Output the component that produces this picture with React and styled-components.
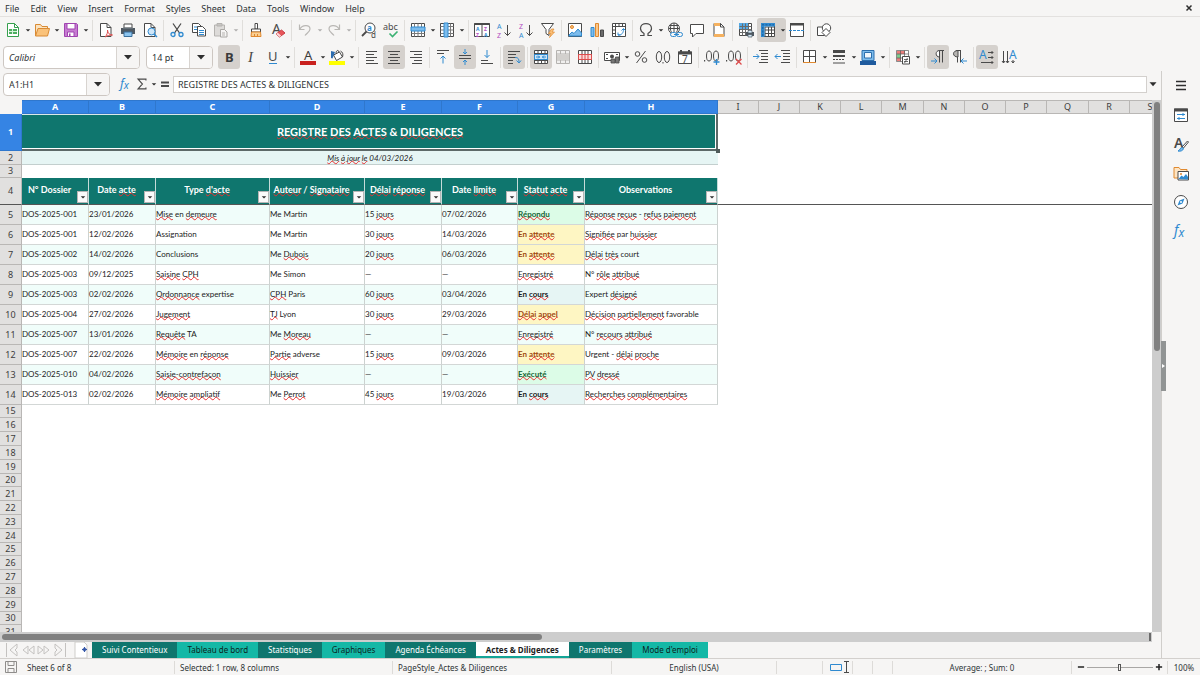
import React from "react";
import styled, { createGlobalStyle, css } from "styled-components";

const ink = "#4a4a4a";
const blue = "#2f8ad0";
const pale = "#8cc4ee";
const orange = "#e0892f";
const red = "#dd4b4b";
const purple = "#b14cc0";

const line = (d, stroke = ink, extra = {}) => (
  <path d={d} stroke={stroke} fill="none" {...extra} />
);

const icons = {
  newDoc: (
    <>
      <path d="M2.5 1.5h7l4 4v9h-11z" fill="#fff" stroke="#36a04e" />
      {line("M9.500 1.500v4h4", "#36a04e")}
      <path d="M4 7h8v5H4z" fill="#4cae5f" />
      {line("M4 9.500h8M7.500 7v5", "#d6f2db")}
    </>
  ),
  open: (
    <>
      <path d="M1.500 14V2.500h5l1.500 2h5.500V7" fill="#fbe3bf" stroke="#d98a33" />
      <path d="M1.500 14l2.500-7.500h11.500L13.500 14z" fill="#fac27a" stroke="#d98a33" />
    </>
  ),
  save: (
    <>
      <path d="M1.500 1.500h12l1 1v12h-13z" fill="#c67bd1" stroke="#a044b0" />
      <path d="M4 1.500h8V7H4z" fill="#fff" stroke="#a044b0" />
      <path d="M4.500 10h6.500v4.500H4.500z" fill="#fff" stroke="#a044b0" />
      <path d="M6 11.500h1.500v3H6z" fill="#a044b0" />
    </>
  ),
  pdf: (
    <>
      <path d="M2.500 1.500h6.500l4 4v9H2.500z" fill="#fff" stroke={ink} />
      {line("M9 1.500v4h4")}
      <path d="M7 15c2-2 3-5 2.500-7 0 3 2 5 5 5-3 0-5 .5-7.500 2z" fill="#fff" stroke={red} />
    </>
  ),
  print: (
    <>
      <path d="M4 2h8v4H4z" fill="#fff" stroke={ink} />
      <path d="M1 6h14v6H1z" fill="#4f5962" />
      <path d="M3 6h10" stroke="#7b858d" />
      <path d="M4 10h8v4.500H4z" fill={pale} stroke="#3a6f9b" />
    </>
  ),
  preview: (
    <>
      <path d="M2.500 1.500h6.500l4 4v9H2.500z" fill="#fff" stroke={ink} />
      {line("M9 1.500v4h4")}
      <circle cx="9.500" cy="9.500" r="3.500" fill="#cfe6f8" stroke={blue} />
      {line("M12 12l3 3", blue, { strokeWidth: 1.5 })}
    </>
  ),
  cut: (
    <>
      {line("M4 1.500l6.500 9.500M12 1.500L5.500 11", ink, { strokeWidth: 1.3 })}
      <circle cx="4" cy="12.500" r="2" fill="none" stroke={blue} strokeWidth="1.3" />
      <circle cx="12" cy="12.500" r="2" fill="none" stroke={blue} strokeWidth="1.3" />
    </>
  ),
  copy: (
    <>
      <path d="M1.500 1.500h6l2.500 2.500v6.500H1.500z" fill="#fff" stroke={ink} />
      {line("M3 5h5M3 7.500h4", blue)}
      <path d="M6.500 4.500h5l3 3v6.500h-8z" fill="#fff" stroke={ink} />
      {line("M8 8.500h5M8 10.500h5M8 12.500h5", blue)}
    </>
  ),
  paste: (
    <>
      <path d="M1.500 3h10v11h-10z" fill="#dddbd9" stroke="#b5b3b0" />
      <path d="M4 1.500h5V4H4z" fill="#c8c6c3" stroke="#b5b3b0" />
      <path d="M7.500 7.500h4l2.500 2.500v5H7.500z" fill="#f6f5f4" stroke="#a9a7a4" />
      {line("M9 11h3M9 13h3", "#b5b3b0")}
    </>
  ),
  clone: (
    <>
      <path d="M7 1.500h2.500V7H7z" fill="#fff" stroke={ink} />
      <path d="M3.500 7h9v3h-9z" fill="#fff" stroke={ink} />
      <path d="M3.500 10h9l.5 4.500H3z" fill="#fbcf92" stroke={orange} />
      {line("M6.500 12v2.500M9.500 12v2.500", orange)}
    </>
  ),
  clear: (
    <>
      <text x="2" y="12" fontSize="14" fill={ink}>A</text>
      <path d="M6 12l5.500-4 3.500 3-5.500 4z" fill="#e8555a" stroke="#c93d44" />
      <path d="M6 12l1.800-1.300 3.500 3L9.500 15z" fill="#fbd5d6" />
    </>
  ),
  undo: line("M2.500 2.500v5h5M3 7c2-4 10-5 10 0 0 3-3 4-5 6.500", "#b9b7b4", { strokeWidth: 1.2 }),
  redo: line("M13.500 2.500v5h-5M13 7c-2-4-10-5-10 0 0 3 3 4 5 6.500", "#b9b7b4", { strokeWidth: 1.2 }),
  find: (
    <>
      <circle cx="9" cy="6" r="5" fill="#fff" stroke={ink} />
      {line("M5.500 9.500L1 14", ink, { strokeWidth: 1.8 })}
      <text x="6" y="8.500" fontSize="8" fontWeight="700" fill={blue}>a</text>
      <text x="10" y="15.500" fontSize="8" fill={ink}>d</text>
    </>
  ),
  spell: (
    <>
      <text x="0" y="8" fontSize="9" fill={ink}>abc</text>
      {line("M6.500 11.500l3 3 5-5", "#3bb273", { strokeWidth: 1.6 })}
    </>
  ),
  row: (
    <>
      <path d="M1.500 1.500h13v13h-13z" fill="#fff" stroke={ink} />
      {line("M1.500 11.500h13M4.500 1.500v13M8 1.500v13M11.500 1.500v13", "#7a7a7a")}
      <path d="M1 5h14v4H1z" fill="#7dbcec" stroke={blue} />
    </>
  ),
  column: (
    <>
      <path d="M1.500 1.500h13v13h-13z" fill="#fff" stroke={ink} />
      {line("M11.500 1.500v13M1.500 4.500h13M1.500 8h13M1.500 11.500h13", "#7a7a7a")}
      <path d="M5 1h4v14H5z" fill="#7dbcec" stroke={blue} />
    </>
  ),
  sort: (
    <>
      <path d="M.500 1.500h15v13H.500z" fill="#fff" stroke={ink} />
      <path d="M.500 1h15v2H.500z" fill={ink} />
      {line("M8 2v13")}
      <text x="2" y="8.500" fontSize="5" fontWeight="700" fill={blue}>A</text>
      <text x="2" y="14.500" fontSize="5" fontWeight="700" fill={purple}>Z</text>
      <text x="10" y="8.500" fontSize="5" fontWeight="700" fill={purple}>Z</text>
      <text x="10" y="14.500" fontSize="5" fontWeight="700" fill={blue}>A</text>
    </>
  ),
  sortAsc: (
    <>
      <text x="1" y="6.500" fontSize="7" fill={blue}>A</text>
      <text x="1" y="16" fontSize="7" fill={purple}>Z</text>
      {line("M11.500 3v10.500M8.500 10.500l3 3 3-3")}
    </>
  ),
  sortDesc: (
    <>
      <text x="1" y="6.500" fontSize="7" fill={purple}>Z</text>
      <text x="1" y="16" fontSize="7" fill={blue}>A</text>
      {line("M11.500 3v10.500M8.500 10.500l3 3 3-3")}
    </>
  ),
  filter: (
    <>
      <path d="M1.500 1.500h12l-4.500 6v6L6 11.500v-4z" fill="#fff" stroke={ink} />
      <path d="M11.500 7L8.500 11.500h2.500L9.500 15.500l5-5.500h-2.500l2-3z" fill="#fbc078" stroke={orange} strokeWidth=".7" />
    </>
  ),
  image: (
    <>
      <path d="M1.500 1.500h13v13h-13z" fill="#fff" stroke={ink} />
      <circle cx="5" cy="5" r="1.500" fill="#fbc078" stroke={orange} />
      <path d="M2 13l3-3 2 1.500 4-4.500 3.500 4V14H2z" fill="#7dbcec" stroke={blue} />
    </>
  ),
  chart: (
    <>
      <path d="M2 5.500h3v9H2z" fill="#7dbcec" stroke={blue} />
      <path d="M6.500 1.500h3v13h-3z" fill="#fbc78a" stroke={orange} />
      <path d="M11.500 8h3v6.500h-3z" fill="#6a6a6a" stroke={ink} />
    </>
  ),
  pivot: (
    <>
      <path d="M1.500 1.500h13v13h-13z" fill="#fff" stroke={ink} />
      {line("M1.500 4.500h13M4.500 1.500v13M8 1.500v3M11.500 1.500v3M1.500 8h3M1.500 11.500h3")}
      {line("M7 10.500v2.500h2.500M7 13c4 0 5.500-2 5.500-6M10.500 8.500l2-2 2 2", blue)}
    </>
  ),
  omega: line("M2 13.500h4v-2C3.500 10 2.500 8.500 2.500 6.500c0-6.500 11-6.500 11 0 0 2-1 3.500-3.500 5v2h4", ink, { strokeWidth: 1.2 }),
  link: (
    <>
      <circle cx="7" cy="6.500" r="5.500" fill="#fff" stroke={ink} />
      {line("M1.500 6.500h11M7 1v11M2.500 3.500h9M4.500 2.500c-1.500 3-1.500 5 0 8M9.500 2.500c1.500 3 1.500 5 0 8")}
      <rect x="3.500" y="10.500" width="6" height="4" rx="2" fill="#f6f5f4" stroke={blue} />
      <rect x="9.500" y="10.500" width="6" height="4" rx="2" fill="#f6f5f4" stroke={blue} />
      {line("M7 12.500h5", blue)}
    </>
  ),
  comment: <path d="M1.500 2.500h13v9H7l-3.500 3.500v-3.500h-2z" fill="#fff" stroke={ink} />,
  headFoot: (
    <>
      <path d="M3 1.500h6.500l3.500 3.500v9.500H3z" fill="#fff" stroke={ink} />
      <path d="M3 1h6v3H3zM3 12h10v3H3z" fill="#f5b15f" />
      {line("M9.500 1.500V5H13")}
    </>
  ),
  printArea: (
    <>
      <path d="M1.500 1.500h12v12h-12z" fill="#fff" stroke={ink} />
      <path d="M1 1h9v6H1z" fill="#55aae6" />
      {line("M1.500 4.500h12M1.500 7.500h12M1.500 10.500h12M4.500 1.500v12M7.500 1.500v12M10.500 1.500v12", "#6a6a6a")}
      <path d="M8 10h8v4H8z" fill="#4f5962" />
      <path d="M10 8.500h4V11h-4zM10 12.500h4V15h-4z" fill="#d3e8f8" stroke="#4f5962" strokeWidth=".7" />
    </>
  ),
  freeze: (
    <>
      <path d="M1.500 1.500h13v13h-13z" fill="#fff" stroke={ink} />
      {line("M5 8h9.500M5 11.500h9.500M8.500 5v9.500M11.500 5v9.500M5 5v9.500M5 5h9.500")}
      <path d="M1 1h14v3.500H4.500V15H1z" fill={blue} />
      {line("M2 2.800h12M2.800 5v9", "#1c5f9a", { strokeDasharray: "2 1.500" })}
    </>
  ),
  split: (
    <>
      <path d="M1.500 1.500h13v13h-13z" fill="#fff" stroke={ink} />
      <path d="M1 1h14v2.500H1z" fill={ink} />
      {line("M0 8.500h16", blue, { strokeDasharray: "3 1" })}
    </>
  ),
  shapes: (
    <>
      <path d="M1.500 5h7v8.500h-7z" fill="#fff" stroke={ink} />
      <circle cx="10.500" cy="6" r="4.200" fill="#fff" stroke={ink} />
      <path d="M10 6.500l4 4-4 4-4-4z" fill="#fff" stroke={ink} />
    </>
  ),
  bold: <text x="4" y="13" fontSize="13" fontWeight="700" fill="#3a3a3a">B</text>,
  italic: (
    <text x="5" y="13" fontSize="15" fontStyle="italic" fontFamily="Liberation Serif" fill={ink}>I</text>
  ),
  underline: (
    <>
      <text x="3" y="12" fontSize="13" fill={ink}>U</text>
      {line("M4 14.500h8", blue)}
    </>
  ),
  fontColor: (
    <>
      <text x="4" y="11" fontSize="13" fill="#3a3a3a">A</text>
      <path d="M0 12h16v4H0z" fill="#c9211e" />
    </>
  ),
  highlight: (
    <>
      <path d="M4.500 6l6-3 3 5-6 3.500z" fill="#fff" stroke={ink} />
      {line("M7 4.500C7 1 9.500.5 10 3M13.500 8c1-3 0-5-2-6")}
      <path d="M2 2l4 1-2.500 6.500L2 9z" fill="#2b6cb0" />
      <path d="M0 12h16v4H0z" fill="#ffff00" />
    </>
  ),
  alignLeft: line("M2 2.500h11M2 5.500h8M2 8.500h11M2 11.500h8M2 14.500h12"),
  alignCenter: line("M2 2.500h12M4 5.500h8M2 8.500h12M4 11.500h8M2 14.500h12"),
  alignRight: line("M2 2.500h12M6 5.500h8M2 8.500h12M6 11.500h8M4 14.500h10"),
  top: (
    <>
      {line("M2 1.500h12M2 4.500h7")}
      {line("M8 14.500V7M5.500 9.500L8 7l2.500 2.500", blue)}
    </>
  ),
  middle: (
    <>
      {line("M2 6.500h12M2 9.500h12")}
      {line("M8 0v5M6 3l2 2 2-2M8 16v-5M6 13l2-2 2 2", blue)}
    </>
  ),
  bottom: (
    <>
      {line("M2 11.500h7M2 14.500h12")}
      {line("M8 1v7.500M5.500 6L8 8.500 10.500 6", blue)}
    </>
  ),
  wrap: (
    <>
      {line("M2 2.500h12M2 5.500h8M2 8.500h8M2 11.500h5M2 14.500h5")}
      {line("M9 8.500c3 0 4 1 4 5M10.500 11.500l2.500 2.500 2-2.500", blue)}
    </>
  ),
  merge: (
    <>
      <path d="M1.500 1.500h13v13h-13z" fill="#fff" stroke={ink} />
      {line("M1.500 4.500h13M1.500 11.500h13M5 1.500v3M8.500 1.500v3M12 1.500v3M5 11.500v3M8.500 11.500v3M12 11.500v3")}
      <path d="M1.500 5.500h13v5h-13z" fill="#cfe6f8" stroke={blue} />
      {line("M3 8h4M5 6.500L6.500 8 5 9.500M13 8H9M11 6.500L9.500 8l1.500 1.500", blue)}
    </>
  ),
  mergeCells: (
    <>
      <path d="M1.500 1.500h13v13h-13z" fill="#f0efee" stroke="#b5b3b0" />
      {line("M1.500 5h13M1.500 11h13M5.500 1.500V5M10.500 1.500V5M5.500 11v3.500M10.500 11v3.500", "#b5b3b0")}
      <path d="M2 5.500h12v5H2z" fill="#d2d0cd" />
    </>
  ),
  unmerge: (
    <>
      <path d="M1.500 1.500h13v13h-13z" fill="#fff" stroke={ink} />
      {line("M5 1.500v13M8 1.500v13M11 1.500v13")}
      <path d="M1.500 5.500h13v5h-13z" fill="#fbdcdc" stroke={red} />
      {line("M5 5.500v5M8 5.500v5M11 5.500v5", red)}
    </>
  ),
  currency: (
    <>
      <path d="M.500 3.500h15v8H.500z" fill="#fff" stroke={ink} />
      <circle cx="8" cy="7.500" r="2" fill={ink} />
      {line("M2 5.500h2M12 5.500h2M2 9.500h2")}
      <path d="M7 10h4v4H7zM11.500 8H15v6h-3.500z" fill="#777" stroke={ink} strokeWidth=".8" />
    </>
  ),
  percent: (
    <>
      <circle cx="4.500" cy="5" r="2.300" fill="none" stroke={ink} />
      <circle cx="11.500" cy="11" r="2.300" fill="none" stroke={ink} />
      {line("M12.500 2L3.500 14")}
    </>
  ),
  decimal: (
    <>
      <ellipse cx="4" cy="8" rx="2.700" ry="5.500" fill="none" stroke={ink} />
      <ellipse cx="12" cy="8" rx="2.700" ry="5.500" fill="none" stroke={ink} />
      <path d="M7.500 13h1v1.500h-1z" fill={ink} />
    </>
  ),
  date: (
    <>
      <path d="M1.500 3h13v11.500h-13z" fill="#fff" stroke={ink} />
      <path d="M1 2.500h14v3H1zM3 1h2v2H3zM11 1h2v2h-2z" fill={ink} />
      <text x="5" y="14" fontSize="10" fill={ink}>7</text>
    </>
  ),
  addDecimal: (
    <>
      <ellipse cx="5" cy="7" rx="2.500" ry="5" fill="none" stroke={ink} />
      <ellipse cx="12" cy="7" rx="2.500" ry="5" fill="none" stroke={ink} />
      <path d="M0 11h1.200v1.500H0z" fill={ink} />
      {line("M12.500 10v6M9.500 13h6", blue, { strokeWidth: 1.3 })}
    </>
  ),
  delDecimal: (
    <>
      <ellipse cx="5" cy="7" rx="2.500" ry="5" fill="none" stroke={ink} />
      <ellipse cx="12" cy="7" rx="2.500" ry="5" fill="none" stroke={ink} />
      <path d="M0 11h1.200v1.500H0z" fill={ink} />
      {line("M10 10l5.500 5.500M15.500 10L10 15.500", red, { strokeWidth: 1.3 })}
    </>
  ),
  indent: (
    <>
      {line("M6 1.500h9M8 4.500h7M8 7.500h7M8 10.500h7M6 13.500h9")}
      {line("M0 7.500h6M3.500 5L6 7.500 3.500 10", blue)}
    </>
  ),
  outdent: (
    <>
      {line("M6 1.500h9M8 4.500h7M8 7.500h7M8 10.500h7M6 13.500h9")}
      {line("M0 7.500h6M2.500 5L0 7.500 2.500 10", blue)}
    </>
  ),
  borders: (
    <>
      <path d="M1.500 1.500h12v12h-12z" fill="#fff" stroke={ink} />
      {line("M7.500 1.500v12M1.500 7.500h12")}
      {line("M1 13.500h13", orange)}
    </>
  ),
  borderStyle: (
    <>
      <path d="M2 1h12v3H2zM2 6h12v2H2z" fill={ink} />
      {line("M2 10.500h12", ink, { strokeDasharray: "2 1" })}
      {line("M2 14h12")}
    </>
  ),
  borderColor: (
    <>
      <path d="M2 1.500h12v10H2z" fill="#7dbcec" stroke="#2d6fad" />
      <path d="M4.500 3.500h7V9h-7z" fill="#f1f7fc" stroke="#2d6fad" />
      <path d="M0 12h16v4H0z" fill="#1f5b9e" />
    </>
  ),
  conditional: (
    <>
      <path d="M1.500 1.500h12v11h-12z" fill="#fff" />
      <path d="M2 2h8v3H2z" fill="#ea7f7c" />
      <path d="M2 5h4v4H2z" fill="#7fca8c" />
      <path d="M2 9h4v3H2z" fill="#ea7f7c" />
      {line("M1.500 1.500h12v11h-12zM1.500 5h12M1.500 9h12M5.500 1.500v11M9.500 1.500v11", "#5a5a5a", { strokeWidth: 0.7 })}
      <path d="M7.500 7.500h7v7.500h-7z" fill="#fff" stroke={ink} />
      {line("M9 10.500h4M9 12.500h4M12.500 9L9.500 14", ink, { strokeWidth: 0.8 })}
    </>
  ),
  ltr: (
    <>
      {line("M14 1.500H9M9.500 1.500v12M12.500 1.500v12")}
      <path d="M9.500 1.500C5 1.500 5 8 9.500 8z" fill="#fff" stroke={ink} />
      {line("M1 12h6M4.500 9.500L7 12l-2.500 2.500", blue)}
    </>
  ),
  rtl: (
    <>
      {line("M9 1.500H4M5.500 8v5.500M8.500 1.500v12")}
      <path d="M6 1.500C0 1.500 0 8 6 8z" fill="#b7b5b2" stroke={ink} />
      {line("M15 12H9M11.500 9.500L9 12l2.500 2.500", blue)}
    </>
  ),
  textHorizontal: (
    <>
      <text x="0" y="10" fontSize="12" fill={blue}>A</text>
      {line("M9 3.500h5M12.500 2L14 3.500 12.500 5M9 8.500h5M12.500 7L14 8.500 12.500 10M2 13.500h12M12.500 12l1.500 1.500-1.500 1.500")}
    </>
  ),
  textVertical: (
    <>
      <text x="8" y="10" fontSize="12" fill={blue}>A</text>
      {line("M2.500 2v12M1 12l1.500 2L4 12M6.500 2v12M5 12l1.500 2L8 12M12 11v3M10.500 12l1.500 2 1.500-2")}
    </>
  ),
  fx: (
    <text x="1" y="12" fontSize="14" fontStyle="italic" fontFamily="Noto Sans" fill={blue}>
      f<tspan dy="2" fontSize="12">x</tspan>
    </text>
  ),
  sigma: line("M12.500 4V2.500H3.500l5 5.500-5 5.500h9V12", ink, { strokeWidth: 1.3 }),
  equals: line("M4 6.500h8M4 10h8", ink, { strokeWidth: 2 }),
  menu: line("M3 3.500h10M3 7.500h10M3 11.500h10", "#2e2e2e", { strokeWidth: 1.4 }),
  properties: (
    <>
      <path d="M1.500 2h13v12.500h-13z" fill="#fff" stroke={ink} />
      <path d="M1 1.500h14v3H1z" fill={ink} />
      {line("M4 7.500h8M10 6v3M4 11.500h8M6 10v3", blue)}
    </>
  ),
  styles: (
    <>
      <text x="1" y="12" fontSize="14" fontWeight="600" fill={ink}>A</text>
      <path d="M14.500 5l1 1-5 6-1.500-1z" fill="#fff" stroke={ink} />
      <path d="M5 15c2 .5 5 0 5.500-2.500L9 11.500C7 11.500 7.500 14 5 15z" fill="#7dbcec" stroke={blue} />
    </>
  ),
  gallery: (
    <>
      <path d="M1 13V2.500h5l1.500 2H14V13z" fill="#fde4c3" stroke={orange} />
      <path d="M5 6.500h10.500V15H5z" fill="#fff" stroke={ink} />
      <path d="M5.500 14l3-3.500 2 1.500 2.500-3 2 3V14.500z" fill={blue} />
      <circle cx="8" cy="9" r="1" fill={orange} />
    </>
  ),
  navigator: (
    <>
      <circle cx="8" cy="8" r="6.500" fill="#fff" stroke={ink} />
      <path d="M11.500 4.500L9.500 9.500l-5 2 2-5z" fill={blue} />
      <circle cx="8" cy="8" r="1" fill="#fff" />
    </>
  ),
  caret: <path d="M4 6h8l-4 4.500z" fill="#2e2e2e" />,
  smallCaret: <path d="M2 6h12l-6 6z" fill="#2e2e2e" />,
  close: line("M3 3l10 10M13 3L3 13", "#2e2e2e", { strokeWidth: 3 }),
  first: line("M2.500 1v14M13 2L6 8l7 6v-4l-2-2 2-2z", "#c4c2c0"),
  prev: line("M8 4L3 8l5 4zM14 4L9 8l5 4z", "#c4c2c0"),
  next: line("M2 4l5 4-5 4zM8 4l5 4-5 4z", "#c4c2c0"),
  last: line("M13.500 1v14M3 2l7 6-7 6v-4l2-2-2-2z", "#c4c2c0"),
  addSheet: (
    <>
      <path d="M1 0h9l3 3v13H1z" fill="#fff" stroke="#cfcdca" />
      <circle cx="10.500" cy="7.500" r="1.500" fill="none" stroke="#3557a8" />
      {line("M10.500 5v5M8 7.500h5", "#3557a8")}
    </>
  ),
  saved: line("M2.500 2.500h11v11h-11zM5 2.500h6v4H5zM5 9.500h6v4H5z", "#8f8d8b"),
  minus: line("M3 8h10", "#222", { strokeWidth: 2.4 }),
  plus: line("M3 8h10M8 3v10", "#222", { strokeWidth: 2.4 }),
};

const Icon = ({ name, size = 16 }) => (
  <svg width={size} height={size} viewBox="0 0 16 16" aria-hidden="true">
    {icons[name]}
  </svg>
);

const ModeIcon = () => (
  <svg width="24" height="12" viewBox="0 0 24 12" aria-hidden="true">
    {line("M4.500 3.500h11v6h-11z", blue)}
    {line("M18 .500h5M20.500 .500v11M18 11.500h5")}
  </svg>
);

const menus = ["File", "Edit", "View", "Insert", "Format", "Styles", "Sheet", "Data", "Tools", "Window", "Help"];

// icon name, then v = has a drop-down arrow, on = pressed, off = disabled; "|" is a separator
const standardBar = [
  ["newDoc", "v"], ["open", "v"], ["save", "v"], "|",
  ["pdf"], ["print"], ["preview"], "|",
  ["cut"], ["copy"], ["paste", "v off"], "|",
  ["clone"], ["clear"], "|",
  ["undo", "v off"], ["redo", "v off"], "|",
  ["find"], ["spell"], "|",
  ["row", "v"], ["column", "v"], "|",
  ["sort"], ["sortAsc"], ["sortDesc"], ["filter"], "|",
  ["image"], ["chart"], ["pivot"], "|",
  ["omega", "v"], ["link"], ["comment"], ["headFoot"], "|",
  ["printArea"], ["freeze", "v on"], ["split"], "|",
  ["shapes"],
];

const formatBar = [
  ["bold", "on"], ["italic"], ["underline", "v"], "|",
  ["fontColor", "v"], ["highlight", "v"], "|",
  ["alignLeft"], ["alignCenter", "on"], ["alignRight"], "|",
  ["top"], ["middle", "on"], ["bottom"], "|",
  ["wrap", "on"], "|",
  ["merge", "on"], ["mergeCells"], ["unmerge"], "|",
  ["currency", "v"], ["percent"], ["decimal"], ["date"], "|",
  ["addDecimal"], ["delDecimal"], "|",
  ["indent"], ["outdent"], "|",
  ["borders", "v"], ["borderStyle", "v"], ["borderColor", "v"], "|",
  ["conditional", "v"], "|",
  ["ltr", "on"], ["rtl"], "|",
  ["textHorizontal", "on"], ["textVertical"],
];

const columns = [
  ["A", 67], ["B", 67], ["C", 114], ["D", 95], ["E", 77], ["F", 76], ["G", 67], ["H", 133],
  ["I", 41], ["J", 41], ["K", 41], ["L", 41], ["M", 42], ["N", 41], ["O", 41], ["P", 41],
  ["Q", 42], ["R", 41], ["S", 41],
];

// words between tildes are flagged by the spell checker
const headings = [
  "N° Dossier",
  "Date ~acte~",
  "Type ~d'acte~",
  "~Auteur~ / ~Signataire~",
  "~Délai~ ~réponse~",
  "Date ~limite~",
  "~Statut~ ~acte~",
  "Observations",
];

const acts = [
  ["DOS-2025-001", "23/01/2026", "~Mise~ en ~demeure~", "Me Martin", "15 ~jours~", "07/02/2026", "~Répondu~", "~Réponse~ ~reçue~ - ~refus~ ~paiement~"],
  ["DOS-2025-001", "12/02/2026", "Assignation", "Me Martin", "30 ~jours~", "14/03/2026", "En ~attente~", "~Signifiée~ par ~huissier~"],
  ["DOS-2025-002", "14/02/2026", "Conclusions", "Me ~Dubois~", "20 ~jours~", "06/03/2026", "En ~attente~", "~Délai~ ~très~ court"],
  ["DOS-2025-003", "09/12/2025", "~Saisine~ ~CPH~", "Me Simon", "—", "—", "~Enregistré~", "N° ~rôle~ ~attribué~"],
  ["DOS-2025-003", "02/02/2026", "~Ordonnance~ expertise", "~CPH~ Paris", "60 ~jours~", "03/04/2026", "En ~cours~", "Expert ~désigné~"],
  ["DOS-2025-004", "27/02/2026", "~Jugement~", "~TJ~ Lyon", "30 ~jours~", "29/03/2026", "~Délai~ ~appel~", "~Décision~ ~partiellement~ favorable"],
  ["DOS-2025-007", "13/01/2026", "~Requête~ TA", "Me ~Moreau~", "—", "—", "~Enregistré~", "N° ~recours~ ~attribué~"],
  ["DOS-2025-007", "22/02/2026", "~Mémoire~ en ~réponse~", "~Partie~ adverse", "15 ~jours~", "09/03/2026", "En ~attente~", "Urgent - ~délai~ ~proche~"],
  ["DOS-2025-010", "04/02/2026", "~Saisie-contrefaçon~", "~Huissier~", "—", "—", "~Exécuté~", "~PV~ ~dressé~"],
  ["DOS-2025-013", "02/02/2026", "~Mémoire~ ~ampliatif~", "Me ~Perrot~", "45 ~jours~", "19/03/2026", "En ~cours~", "~Recherches~ ~complémentaires~"],
];

const statusStyles = {
  "~Répondu~": ["#dcfce7", "#166534"],
  "~Exécuté~": ["#dcfce7", "#166534"],
  "En ~attente~": ["#fef6c3", "#a1490f"],
  "~Délai~ ~appel~": ["#fef6c3", "#a1490f"],
  "En ~cours~": ["#e6f5f4", "#1c1c1c"],
};

const sheets = [
  "Suivi Contentieux",
  "Tableau de bord",
  "Statistiques",
  "Graphiques",
  "Agenda Échéances",
  "Actes & Diligences",
  "Paramètres",
  "Mode d'emploi",
];

const emptyRows = Array.from({ length: 17 }, (_, i) => i + 15);

function Words({ text }) {
  return text.split("~").map((part, i) => (i % 2 ? <Flagged key={i}>{part}</Flagged> : part));
}

const Tools = ({ items }) =>
  items.map((item, i) => {
    if (item === "|") return <Separator key={i} />;
    const [name, flags = ""] = item;
    const on = flags.includes("on");
    const off = flags.includes("off");
    if (!flags.includes("v")) {
      return (
        <ToolButton key={name} $on={on} aria-label={name} aria-pressed={on}>
          <Icon name={name} />
        </ToolButton>
      );
    }
    return (
      <SplitTool key={name} $on={on}>
        <ToolButton aria-label={name} disabled={off}>
          <Icon name={name} />
        </ToolButton>
        <ArrowButton aria-label={`${name} options`} disabled={off}>
          <Icon name="smallCaret" size={6} />
        </ArrowButton>
      </SplitTool>
    );
  });

const Combo = ({ label, value, width, italic }) => (
  <ComboBox>
    <ComboInput aria-label={label} defaultValue={value} $width={width} $italic={italic} />
    <ComboArrow aria-label={`${label} list`}>
      <Icon name="caret" />
    </ComboArrow>
  </ComboBox>
);

function Sheet() {
  return (
    <Grid>
      <colgroup>
        <Col $width={22} />
        {columns.map(([name, width]) => (
          <Col key={name} $width={width} />
        ))}
        <col />
      </colgroup>
      <thead>
        <Row $height={14}>
          <Corner />
          {columns.map(([name], i) => (
            <ColumnHead key={name} scope="col" $selected={i < 8}>
              {name}
            </ColumnHead>
          ))}
          <ColumnHead as="td" />
        </Row>
      </thead>
      <tbody>
        <Row $height={37}>
          <RowHead scope="row" $selected>1</RowHead>
          <TitleCell colSpan={8}>
            <Words text="~REGISTRE~ ~DES~ ~ACTES~ & ~DILIGENCES~" />
            <FillHandle />
          </TitleCell>
          <Blank colSpan={12} />
        </Row>
        <Row $height={14}>
          <RowHead scope="row">2</RowHead>
          <UpdatedCell colSpan={8}>
            <Words text="~Mis~ ~à~ ~jour~ ~le~ 04/03/2026" />
          </UpdatedCell>
          <Blank colSpan={12} />
        </Row>
        <Row $height={13}>
          <RowHead scope="row">3</RowHead>
          <Blank colSpan={20} />
        </Row>
        <Row $height={27}>
          <RowHead scope="row" $frozen>4</RowHead>
          {headings.map((text) => (
            <HeadCell key={text}>
              <Words text={text} />
              <FilterButton aria-label="Filter">
                <Icon name="smallCaret" size={6} />
              </FilterButton>
            </HeadCell>
          ))}
          <Blank colSpan={12} $frozen />
        </Row>
        {acts.map((act, i) => (
          <Row key={i} $height={20}>
            <RowHead scope="row">{i + 5}</RowHead>
            {act.map((text, c) => {
              const [fill, color] = (c === 6 && statusStyles[text]) || [];
              return (
                <Cell key={c} $even={i % 2 === 0} $fill={fill} $color={color}>
                  <Words text={text} />
                </Cell>
              );
            })}
            <Blank colSpan={12} />
          </Row>
        ))}
        {emptyRows.map((n) => (
          <Row key={n} $height={n % 5 ? 14 : 13}>
            <RowHead scope="row">{n}</RowHead>
            <Blank colSpan={20} />
          </Row>
        ))}
      </tbody>
    </Grid>
  );
}

function App() {
  return (
    <>
      <GlobalStyle />
      <Window>
        <MenuBar>
          {menus.map((name) => (
            <MenuButton key={name}>{name}</MenuButton>
          ))}
          <CloseButton aria-label="Close document">
            <Icon name="close" size={8} />
          </CloseButton>
        </MenuBar>
        <Toolbar>
          <Tools items={standardBar} />
        </Toolbar>
        <Toolbar>
          <Combo label="Font name" value="Calibri" width={112} italic />
          <Combo label="Font size" value="14 pt" width={42} />
          <Tools items={formatBar} />
        </Toolbar>
        <Workspace>
          <Editor>
            <FormulaBar>
              <Combo label="Name box" value="A1:H1" width={82} />
              <FormulaTools>
                <FormulaButton aria-label="Function wizard">
                  <Icon name="fx" size={14} />
                </FormulaButton>
                <FormulaButton aria-label="Sum">
                  <Icon name="sigma" size={14} />
                </FormulaButton>
                <ArrowButton aria-label="Sum options">
                  <Icon name="smallCaret" size={6} />
                </ArrowButton>
                <FormulaButton aria-label="Formula">
                  <Icon name="equals" />
                </FormulaButton>
              </FormulaTools>
              <FormulaInput aria-label="Formula" defaultValue="REGISTRE DES ACTES & DILIGENCES" />
              <ArrowButton aria-label="Expand formula bar">
                <Icon name="caret" size={14} />
              </ArrowButton>
            </FormulaBar>
            <SheetArea>
              <SheetView>
                <Sheet />
              </SheetView>
              <VerticalScroll>
                <VerticalThumb />
              </VerticalScroll>
            </SheetArea>
            <HorizontalScroll>
              <HorizontalThumb />
              <SplitMark />
            </HorizontalScroll>
            <TabBar>
              <TabNav>
                {["first", "prev", "next", "last"].map((name) => (
                  <NavButton key={name} aria-label={`${name} sheet`}>
                    <Icon name={name} />
                  </NavButton>
                ))}
              </TabNav>
              <AddButton aria-label="Add sheet">
                <Icon name="addSheet" />
              </AddButton>
              <Tabs role="tablist">
                {sheets.map((name, i) => (
                  <Tab key={name} role="tab" aria-selected={i === 5} $active={i === 5} $light={i % 2 === 1}>
                    {name}
                  </Tab>
                ))}
              </Tabs>
            </TabBar>
          </Editor>
          <SideBar>
            <DeckHandle aria-label="Show sidebar deck" />
            {["menu", "properties", "styles", "gallery", "navigator", "fx"].map((name) => (
              <SideButton key={name} aria-label={name}>
                <Icon name={name} />
              </SideButton>
            ))}
          </SideBar>
        </Workspace>
        <StatusBar>
          <StatusItem $plain $center>
            <Icon name="saved" />
          </StatusItem>
          <StatusItem $plain>Sheet 6 of 8</StatusItem>
          <StatusItem>Selected: 1 row, 8 columns</StatusItem>
          <StatusItem>PageStyle_Actes &amp; Diligences</StatusItem>
          <StatusItem $center>English (USA)</StatusItem>
          <StatusItem />
          <StatusItem $center>
            <ModeIcon />
          </StatusItem>
          <StatusItem />
          <StatusItem />
          <StatusItem $center>Average: ; Sum: 0</StatusItem>
          <StatusItem $center>
            <ZoomButton aria-label="Zoom out">
              <Icon name="minus" size={10} />
            </ZoomButton>
            <ZoomSlider type="range" aria-label="Zoom" defaultValue="50" />
            <ZoomButton aria-label="Zoom in">
              <Icon name="plus" size={10} />
            </ZoomButton>
          </StatusItem>
          <StatusItem $center>100%</StatusItem>
        </StatusBar>
      </Window>
    </>
  );
}

const GlobalStyle = createGlobalStyle`
  * {
    box-sizing: border-box;
  }

  body {
    margin: 0;
    background: #f6f5f4;
    color: #2e3436;
    font-family: "Noto Sans", sans-serif;
    font-size: 9px;
  }

  button,
  input {
    margin: 0;
    padding: 0;
    border: 0;
    background: none;
    color: inherit;
    font: inherit;
    outline: none;
  }

  svg {
    display: block;
    flex: none;
    overflow: visible;
  }
`;

const Window = styled.main`
  display: flex;
  flex-direction: column;
  height: 100vh;
  overflow: hidden;
`;

const MenuBar = styled.nav`
  display: flex;
  align-items: center;
  height: 17px;
  border-bottom: 1px solid #e3e1df;
`;

const MenuButton = styled.button`
  padding: 1px 6px 0 5px;
  line-height: 16px;
`;

const CloseButton = styled.button`
  margin-left: auto;
  padding: 0 7px;
`;

const Toolbar = styled.div`
  display: flex;
  align-items: center;
  height: 27px;
  padding: 0 0 1px 2px;
`;

const ToolButton = styled.button`
  display: flex;
  align-items: center;
  justify-content: center;
  width: 22px;
  height: 24px;
  border-radius: 3px;
  background: ${({ $on }) => ($on ? "#d5d1cd" : "none")};
`;

const ArrowButton = styled.button`
  display: flex;
  justify-content: center;
  width: 7px;

  &:disabled {
    opacity: 0.35;
  }
`;

const SplitTool = styled.div`
  display: flex;
  align-items: center;
  border-radius: 3px;
  background: ${({ $on }) => ($on ? "#d5d1cd" : "none")};
`;

const Separator = styled.span`
  width: 1px;
  height: 21px;
  margin: 0 2px;
  background: #e0dedb;

  ${SplitTool} + & {
    margin-left: 3px;
  }
`;

const ComboBox = styled.div`
  display: flex;
  height: 23px;
  margin: 0 5px 0 1px;
  border: 1px solid #cdc7c2;
  border-radius: 4px;
  background: #fff;
  overflow: hidden;
`;

const ComboInput = styled.input`
  width: ${({ $width }) => $width}px;
  padding-left: 5px;
  font-style: ${({ $italic }) => ($italic ? "italic" : "normal")};
`;

const ComboArrow = styled.button`
  display: flex;
  align-items: center;
  justify-content: center;
  width: 23px;
  border-left: 1px solid #d8d4d0;
  background: #f6f5f4;
`;

const Workspace = styled.div`
  display: flex;
  flex: 1;
  min-height: 0;
`;

const Editor = styled.section`
  display: flex;
  flex: 1;
  flex-direction: column;
  min-width: 0;
  border-right: 1px solid #d0cecb;
`;

const FormulaBar = styled.div`
  display: flex;
  align-items: center;
  height: 29px;
  padding: 0 5px 3px 2px;
`;

const FormulaTools = styled.div`
  display: flex;
  align-items: center;
  padding-left: 3px;
`;

const FormulaButton = styled.button`
  display: flex;
  justify-content: center;
  width: 16px;
`;

const FormulaInput = styled.input`
  flex: 1;
  height: 17px;
  margin-right: 2px;
  padding-left: 4px;
  border: 1px solid #d3d0cd;
  background: #fff;
`;

const SheetArea = styled.div`
  display: flex;
  flex: 1;
  min-height: 0;
`;

const SheetView = styled.div`
  flex: 1;
  overflow: hidden;
  background: #fff;
`;

const VerticalScroll = styled.div`
  width: 9px;
  padding: 2px 1px 0 2px;
  background: #cdcdcd;
`;

const VerticalThumb = styled.div`
  height: 47%;
  border-radius: 3px;
  background: #808080;
`;

const HorizontalScroll = styled.div`
  display: flex;
  align-items: center;
  justify-content: space-between;
  height: 10px;
  margin-right: 9px;
  padding: 0 1px 0 2px;
  background: #cdcdcd;
`;

const HorizontalThumb = styled.div`
  width: 47%;
  height: 6px;
  border-radius: 3px;
  background: #808080;
`;

const SplitMark = styled.div`
  width: 2px;
  height: 8px;
  background: #6a6a6a;
`;

const Grid = styled.table`
  width: 100%;
  border-collapse: separate;
  border-spacing: 0;
  table-layout: fixed;
  line-height: 12px;

  th,
  td {
    padding: 0;
    white-space: nowrap;
  }
`;

const Col = styled.col`
  width: ${({ $width }) => $width}px;
`;

const Row = styled.tr`
  height: ${({ $height }) => $height}px;
`;

const Corner = styled.td`
  background: #f6f5f4;
`;

const selectedHead = css`
  border-color: #2f77cd;
  background: #3584e4;
  color: #fff;
  font-weight: 700;
`;

const headCell = css`
  border: 0 solid #b9b7b5;
  background: #e1e0df;
  color: #3d3d3d;
  font-weight: 400;
  text-align: center;
`;

const ColumnHead = styled.th`
  ${headCell}
  border-width: 1px 1px 1px 0;
  line-height: 10px;
  ${({ $selected }) => $selected && selectedHead}
`;

const RowHead = styled.th`
  ${headCell}
  border-width: 0 1px 1px 0;
  ${({ $selected }) => $selected && selectedHead}
  ${({ $frozen }) => $frozen && "border-bottom-color: #555;"}
`;

const TitleCell = styled.td`
  position: relative;
  background: #0f766e;
  box-shadow: inset -2px -2px 0 #5d6968, inset -3px -3px 0 #fff, inset 0 1px 0 #dbe9e8;
  color: #fff;
  font-family: Lato, sans-serif;
  font-size: 11px;
  font-weight: 700;
  text-align: center;

  && {
    padding-bottom: 2px;
  }
`;

const FillHandle = styled.span`
  position: absolute;
  right: -2px;
  bottom: -2px;
  width: 4px;
  height: 4px;
  background: #4f5b5a;
`;

const UpdatedCell = styled.td`
  border-bottom: 1px solid #c3cfce;
  background: #e6f5f4;
  color: #1c1c1c;
  font-family: Lato, sans-serif;
  font-size: 8px;
  font-style: italic;
  text-align: center;
`;

const HeadCell = styled.th`
  position: relative;
  border-right: 1px solid #c5dbd9;
  border-bottom: 1px solid #555;
  background: #0f766e;
  color: #fff;
  font-family: Lato, sans-serif;
  font-size: 9px;
  font-weight: 700;

  && {
    padding-right: 11px;
    padding-bottom: 2px;
  }
`;

const FilterButton = styled.button`
  position: absolute;
  right: 0;
  bottom: 1px;
  display: flex;
  align-items: center;
  justify-content: center;
  width: 11px;
  height: 12px;
  border: 1px solid #b5b5b5;
  background: #fafafa;
`;

const Cell = styled.td`
  border-right: 1px solid #ccd2d0;
  border-bottom: 1px solid #d3d7d6;
  background: ${({ $fill, $even }) => $fill || ($even ? "#f0fdfa" : "#fff")};
  color: ${({ $color }) => $color || "#1c1c1c"};
  font-family: Lato, sans-serif;
  font-size: 8px;
  font-weight: ${({ $fill }) => ($fill ? 700 : 400)};

  && {
    padding-bottom: 1px;
  }
`;

const Blank = styled.td`
  border-bottom: ${({ $frozen }) => ($frozen ? "1px solid #555" : "0")};
`;

const Flagged = styled.span`
  text-decoration: underline wavy #e83030 1px;
  text-decoration-skip-ink: none;
  text-underline-offset: -1px;
`;

const TabBar = styled.div`
  display: flex;
  height: 16px;
  margin-right: 9px;
`;

const TabNav = styled.div`
  display: flex;
  padding: 0 6px 0 4px;
`;

const NavButton = styled.button`
  display: flex;
  align-items: center;
  width: 16px;
`;

const AddButton = styled(NavButton)`
  width: 18px;
`;

const Tabs = styled.div`
  display: flex;
`;

const Tab = styled.button`
  padding: 0 10px 2px;
  background: ${({ $light }) => ($light ? "#14b8a6" : "#0f766e")};
  color: ${({ $light }) => ($light ? "#0c1f1d" : "#fff")};
  font-size: 8px;
  ${({ $active }) =>
    $active &&
    css`
      padding-bottom: 0;
      border-bottom: 2px solid #14a597;
      background: #fff;
      color: #1c1c1c;
      font-weight: 700;
    `}
`;

const SideBar = styled.aside`
  position: relative;
  display: flex;
  flex-direction: column;
  align-items: center;
  width: 38px;
`;

const SideButton = styled.button`
  display: flex;
  align-items: center;
  justify-content: center;
  width: 28px;
  height: 29px;
`;

const DeckHandle = styled.button`
  position: absolute;
  top: 46%;
  left: -1px;
  width: 5px;
  height: 50px;
  background: #919494;

  &::before {
    content: "";
    display: block;
    width: 0;
    margin-left: 1px;
    border: 2px solid transparent;
    border-right-width: 0;
    border-left: 3px solid #fff;
  }
`;

const StatusBar = styled.footer`
  display: grid;
  grid-template-columns: 22px 152fr 218fr 219fr 165fr 46px 30px 20px 20px 179fr 96px 33px;
  align-items: center;
  height: 17px;
  border-top: 1px solid #d3d0cd;
  font-size: 8px;
`;

const StatusItem = styled.div`
  display: flex;
  align-items: center;
  justify-content: ${({ $center }) => ($center ? "center" : "flex-start")};
  height: 13px;
  padding: ${({ $center }) => ($center ? "0" : "0 0 0 5px")};
  border-left: ${({ $plain }) => ($plain ? "0" : "1px solid #dddbd8")};
  white-space: nowrap;
`;

const ZoomButton = styled.button`
  display: flex;
  justify-content: center;
  width: 12px;
`;

const ZoomSlider = styled.input`
  appearance: none;
  width: 66px;
  height: 10px;
  background: linear-gradient(#a9a7a5, #a9a7a5) center / 100% 1px no-repeat;

  &::-webkit-slider-thumb {
    appearance: none;
    width: 3px;
    height: 7px;
    border: 1px solid #555;
    background: #f6f5f4;
  }
`;

export default App;
